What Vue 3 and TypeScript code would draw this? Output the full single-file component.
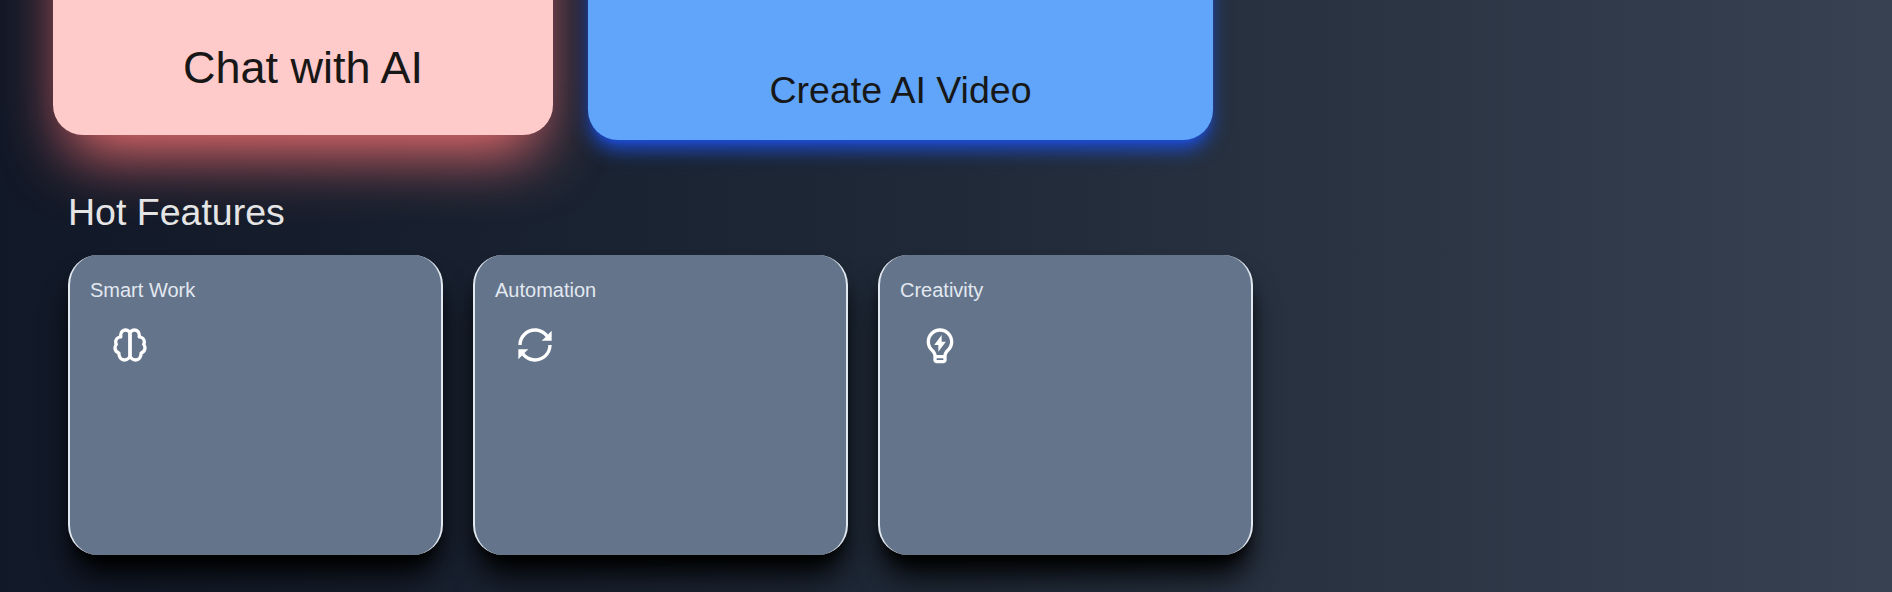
<script setup lang="ts">
interface Feature {
  title: string
  icon: 'brain' | 'loop' | 'bulb'
}

const features: Feature[] = [
  { title: 'Smart Work', icon: 'brain' },
  { title: 'Automation', icon: 'loop' },
  { title: 'Creativity', icon: 'bulb' },
]
</script>

<template>
  <main class="page">
    <section class="heroes">
      <article class="hero chat">Chat with AI</article>
      <article class="hero video">Create AI Video</article>
    </section>
    <h2 class="heading">Hot Features</h2>
    <section class="features">
      <article v-for="f in features" :key="f.title" class="card">
        <h3 class="title">{{ f.title }}</h3>
        <svg class="icon" viewBox="0 0 24 24" aria-hidden="true">
          <g v-if="f.icon === 'brain'" class="stroke">
            <path d="M12 5.6C12 4.1 10.9 3 9.4 3C7.7 3 6.4 4.3 6.4 6.1C6.4 6.5 6.4 6.8 6.5 7.1C4.7 7.3 3.4 8.5 3.4 10.1C3.4 10.7 3.5 11.2 3.8 11.6C3.2 12.2 3 12.9 3 13.7C3 15.2 3.9 16.3 5.3 16.8C5.3 19.2 6.6 21 8.7 21C10.6 21 12 19.6 12 17.7Z" />
            <path d="M12 5.6C12 4.1 13.1 3 14.6 3C16.3 3 17.6 4.3 17.6 6.1C17.6 6.5 17.6 6.8 17.5 7.1C19.3 7.3 20.6 8.5 20.6 10.1C20.6 10.7 20.5 11.2 20.2 11.6C20.8 12.2 21 12.9 21 13.7C21 15.2 20.1 16.3 18.7 16.8C18.7 19.2 17.4 21 15.3 21C13.4 21 12 19.6 12 17.7Z" />
          </g>
          <path v-else-if="f.icon === 'loop'" d="M12 4C14.5905 4 16.8939 5.23053 18.3573 7.14274L16 9.5H22V3.5L19.7814 5.71863C17.9494 3.452 15.1444 2 12 2C6.47715 2 2 6.47715 2 12H4C4 7.58172 7.58172 4 12 4ZM20 12C20 16.4183 16.4183 20 12 20C9.40951 20 7.10605 18.7695 5.64274 16.8573L8 14.5H2V20.5L4.21863 18.2814C6.05062 20.548 8.85557 22 12 22C17.5228 22 22 17.5228 22 12H20Z" />
          <path v-else d="M9.97308 18H14.0269C14.1589 16.7984 14.7721 15.8065 15.7676 14.7226C15.8797 14.6006 16.5988 13.8564 16.6841 13.7501C17.5318 12.6931 18 11.385 18 10C18 6.68629 15.3137 4 12 4C8.68629 4 6 6.68629 6 10C6 11.3843 6.46774 12.6917 7.31462 13.7484C7.40004 13.855 8.12081 14.6012 8.23154 14.7218C9.22766 15.8064 9.84103 16.7984 9.97308 18ZM14 20H10V21H14V20ZM5.75395 14.9992C4.65645 13.6297 4 11.8915 4 10C4 5.58172 7.58172 2 12 2C16.4183 2 20 5.58172 20 10C20 11.8925 19.3428 13.6315 18.2443 15.0014C17.624 15.7748 16 17 16 18.5V21C16 22.1046 15.1046 23 14 23H10C8.89543 23 8 22.1046 8 21V18.5C8 17 6.37458 15.7736 5.75395 14.9992ZM13 10.0048H15.5L11 16.0048V12.0048H8.5L13 6V10.0048Z" />
        </svg>
      </article>
    </section>
  </main>
</template>

<style>
body {
  margin: 0;
  overflow: hidden;
}
</style>

<style scoped>
.page {
  box-sizing: border-box;
  height: 592px;
  overflow: hidden;
  background: linear-gradient(to right, #111827, #1f2937, #374151);
  font-family: "Liberation Sans", Arial, sans-serif;
}
/* the hero cards start above the visible area */
.heroes {
  display: flex;
  align-items: flex-start;
  gap: 35px;
  height: 440px;
  margin-top: -300px;
  padding-left: 53px;
}
.hero {
  box-sizing: border-box;
  display: flex;
  align-items: flex-end;
  justify-content: center;
  border-radius: 30px;
  color: #171717;
  line-height: 50px;
  white-space: nowrap;
}
.chat {
  width: 500px;
  height: 435px;
  padding-bottom: 42px;
  background: #fecaca;
  font-size: 45px;
  box-shadow: 0 31.25px 62.5px -15px #f87171;
}
.video {
  width: 625px;
  height: 440px;
  padding-bottom: 25px;
  background: #60a5fa;
  font-size: 37.5px;
  box-shadow: 0 12.5px 18.75px -3.75px #1d4ed8, 0 5px 7.5px -5px #1d4ed8;
}
.heading {
  margin: 47px 0 18px 68px;
  color: #e5e5e5;
  font-size: 37.5px;
  font-weight: 400;
  line-height: 50px;
}
.features {
  display: flex;
  gap: 30px;
  padding-left: 68px;
}
.card {
  box-sizing: border-box;
  width: 375px;
  height: 300px;
  padding: 20px;
  border: solid #e2e8f0;
  border-width: 0 2px;
  border-radius: 30px;
  background: #64748b;
  box-shadow: 0 25px 31.25px -6.25px #000, 0 10px 12.5px -7.5px #000;
}
.title {
  margin: 0;
  color: #e2e8f0;
  font-size: 20px;
  font-weight: 400;
  line-height: 30px;
}
.icon {
  display: block;
  width: 40px;
  height: 40px;
  margin: 20px 0 0 20px;
  fill: #fff;
}
.stroke {
  fill: none;
  stroke: #fff;
  stroke-width: 2;
  stroke-linejoin: round;
}
</style>
